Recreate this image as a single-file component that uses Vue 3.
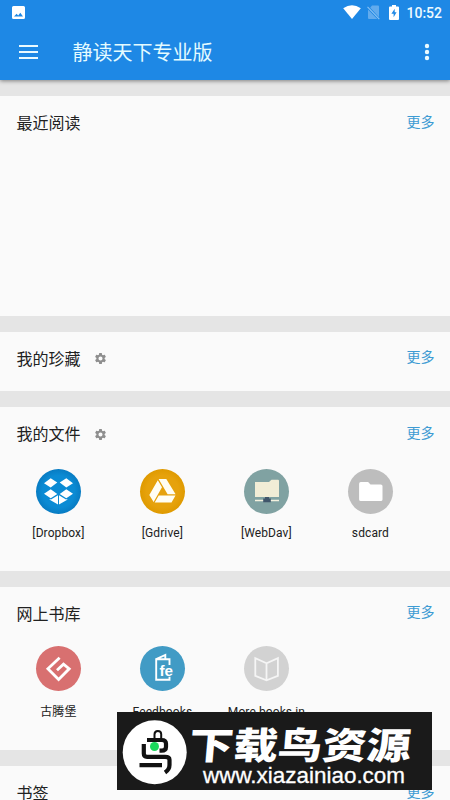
<script setup>
const files = [
  { name: '[Dropbox]', icon: 'dropbox' },
  { name: '[Gdrive]', icon: 'gdrive' },
  { name: '[WebDav]', icon: 'webdav' },
  { name: 'sdcard', icon: 'sdcard' },
]
const libraries = [
  { name: '古腾堡', icon: 'gutenberg' },
  { name: 'Feedbooks', icon: 'feedbooks' },
  { name: 'More books in', icon: 'catalog' },
]
const sections = [
  { title: '最近阅读', size: 'recent', gear: false, items: [] },
  { title: '我的珍藏', size: 'favorites', gear: true, items: [] },
  { title: '我的文件', size: 'grid-card', gear: true, items: files },
  { title: '网上书库', size: 'grid-card library', gear: false, items: libraries },
  { title: '书签', size: 'bookmarks', gear: false, items: [] },
]
</script>

<template>
  <div class="screen">
    <header class="top">
      <div class="status">
        <svg class="photo" viewBox="0 0 13 13"><path fill="#fff" fill-rule="evenodd" d="M1.500 0h10Q13 0 13 1.500v10q0 1.500-1.500 1.500h-10Q0 13 0 11.500v-10Q0 0 1.500 0zM2 10.500h9L8.300 6.800 6.200 9.400 4.600 7.700z" /></svg>
        <div class="status-right">
          <svg class="wifi" viewBox="0 0 18 14"><path fill="#fff" d="M.2 3.300Q9-3 17.800 3.300L9 14z" /></svg>
          <svg class="sim" viewBox="0 0 13 15"><path fill="#62abed" d="M5 .5H11q1 0 1 1v10.700L3.200 2.700zM1 4.600L10.300 14H2q-1 0-1-1z" /><path d="M.5 1.800L12.300 14.200" stroke="#8cc4f4" stroke-width="1.100" /></svg>
          <svg class="battery" viewBox="0 0 10 15"><path fill="#fff" d="M3 0h4v1.500h2q1 0 1 1V14q0 1-1 1H1q-1 0-1-1V2.500q0-1 1-1h2z" /><path fill="#1e88e5" d="M5.700 3.700L2.400 8.700h2.200v3.600l3-5H5.700z" /></svg>
          <span class="clock">10:52</span>
        </div>
      </div>
      <div class="appbar">
        <svg class="menu" viewBox="0 0 19 14"><path d="M0 1h19M0 7h19M0 13h19" stroke="#eafaff" stroke-width="2" /></svg>
        <h1>静读天下专业版</h1>
        <svg class="dots" viewBox="0 0 6 18"><g fill="#eafaff"><circle cx="3" cy="3" r="2.200" /><circle cx="3" cy="9" r="2.200" /><circle cx="3" cy="15" r="2.200" /></g></svg>
      </div>
    </header>

    <main>
      <section v-for="s in sections" :key="s.title" class="card" :class="s.size">
        <div class="head">
          <h2>{{ s.title }}</h2>
          <svg v-if="s.gear" class="gear" viewBox="2 2 20 20"><path fill="#8e8e8e" fill-rule="evenodd" d="M19.430 12.980c.040-.320.070-.640.070-.980s-.030-.660-.070-.980l2.110-1.650a.5.5 0 0 0 .120-.640l-2-3.460a.5.5 0 0 0-.610-.220l-2.490 1a7.300 7.300 0 0 0-1.690-.980l-.380-2.650A.49.49 0 0 0 14 2h-4a.49.49 0 0 0-.490.420l-.380 2.650c-.610.250-1.170.590-1.690.980l-2.490-1a.5.5 0 0 0-.610.220l-2 3.460a.5.5 0 0 0 .120.640l2.110 1.650a7.900 7.900 0 0 0 0 1.960l-2.110 1.650a.5.5 0 0 0-.120.640l2 3.460c.120.220.390.300.610.220l2.490-1c.520.400 1.080.730 1.690.980l.380 2.650c.030.240.240.420.490.420h4c.250 0 .460-.180.490-.420l.380-2.650c.610-.250 1.170-.590 1.690-.980l2.490 1c.230.090.490 0 .610-.220l2-3.460a.5.5 0 0 0-.120-.640zM12 15.700a3.700 3.700 0 1 1 0-7.400 3.700 3.700 0 0 1 0 7.400z" /></svg>
          <a class="more">更多</a>
        </div>
        <div v-if="s.items.length" class="items">
          <div v-for="it in s.items" :key="it.name" class="item">
            <div class="disc" :class="it.icon">
              <svg v-if="it.icon === 'dropbox'" viewBox="0 0 45 45">
                <g fill="#fff"><path d="M14.700 9.300L21.300 13.500 14.700 18.500 8 14.200zM30.300 9.300L37 14.200 30.300 18.500 23.700 13.500zM14.700 20.300L21.300 25 14.700 29.300 8 24.700zM30.300 20.300L37 24.700 30.300 29.300 23.700 25z" /><path d="M22 26.300v9.200L13.700 30.800v-.7l1.300.5zM23 26.300v9.200l8.300-4.700v-.7l-1.300.5z" /></g>
              </svg>
              <svg v-else-if="it.icon === 'gdrive'" viewBox="0 0 45 45"><path fill="#fffef4" d="M18.600 10h7.700l9.300 15.300h-8zM17.800 11.200L22 18.200 13.600 33 9.300 26zM18.700 26.400h16.800l-4 7H14.700z" /></svg>
              <svg v-else-if="it.icon === 'webdav'" viewBox="0 0 45 45"><path fill="#f1edd6" d="M11 13h14l2.500-2.200H34q1 0 1 1V28H11z" /><path stroke="#f4f2df" stroke-width="1.500" d="M11 31.500h24" /><path fill="#40566b" d="M21 28h4v1.500h1.800v3.700h-7.600v-3.700H21z" /></svg>
              <svg v-else-if="it.icon === 'sdcard'" viewBox="0 0 45 45"><path fill="#fff" d="M12.800 13h7.300l2.400 2.400h10.300q1.700 0 1.700 1.700v13.300q0 1.700-1.700 1.700h-20q-1.700 0-1.700-1.700V14.700q0-1.700 1.700-1.700z" /></svg>
              <svg v-else-if="it.icon === 'gutenberg'" viewBox="0 0 45 45"><path fill="none" stroke="#fff" stroke-width="2.800" d="M23.600 11.700L11.900 22.800 22.600 33.600 33.200 22.800 27.500 18.200 21 24.300" /></svg>
              <svg v-else-if="it.icon === 'feedbooks'" viewBox="0 0 45 45"><path fill="none" stroke="#fff" stroke-width="1.900" d="M20.800 13.200H16.200V33.700H29.500V30.800M16.200 13.200L25.300 9V13.200H29.500V19M20.800 13.200h4.500" /><text x="19.500" y="29.800" fill="#fff" textLength="13.500" lengthAdjust="spacingAndGlyphs">fe</text></svg>
              <svg v-else viewBox="0 0 45 45"><path fill="none" stroke="#f5f5f5" stroke-width="1.800" d="M22.500 17.300L11.300 12.200V29.800L22.500 34.300 33.900 29.800V12.200zV34.300" /></svg>
            </div>
            <span class="label">{{ it.name }}</span>
          </div>
        </div>
      </section>
    </main>

    <aside class="banner">
      <svg viewBox="0 0 315 78">
        <rect width="315" height="78" fill="#1a1a1a" />
        <circle cx="37.700" cy="40.300" r="32" fill="#fff" />
        <g fill="none" stroke="#111" stroke-width="4.200">
          <path stroke-width="2" d="M37.500 26V22.500Q37.500 19 40.800 19T44.200 22v4" />
          <path d="M30 28H44.500q4.500 0 4.500 3.500V35q0 3.700-4.500 3.700h-2" />
          <path d="M26.800 32v9.500q0 3.300 3.300 3.300H48q4.500 0 4.500 3V53q0 4.500-4.500 7.500M22.500 53.200H45" />
        </g>
        <circle cx="37.500" cy="34.500" r="4.500" fill="#1bd75c" />
        <g transform="translate(71 47) skewX(-5) scale(1.200 1)"><text class="brand">下载鸟资源</text></g>
        <text class="url" x="86" y="70.500" textLength="202" lengthAdjust="spacingAndGlyphs">www.xiazainiao.com</text>
      </svg>
    </aside>
  </div>
</template>

<style>
body {
  margin: 0;
  overflow: hidden;
}
</style>

<style scoped>
.screen {
  position: relative;
  width: 450px;
  height: 800px;
  overflow: hidden;
  display: flex;
  flex-direction: column;
  background: #e5e5e5;
  font-family: Roboto, "Noto Sans CJK SC", sans-serif;
  color: #212121;
}
svg {
  display: block;
}
.top {
  height: 80px;
  flex: none;
  background: #1e88e5;
  box-shadow: 0 1px 4px rgba(0, 0, 0, 0.45);
}
.status {
  height: 24px;
  display: flex;
  align-items: center;
  justify-content: space-between;
  padding: 0 8px 0 12px;
}
.photo {
  width: 13px;
  height: 13px;
}
.status-right {
  display: flex;
  align-items: center;
}
.wifi {
  width: 18px;
  height: 14px;
  margin-right: 6px;
}
.sim {
  width: 13px;
  height: 15px;
  margin-right: 9px;
}
.battery {
  width: 10px;
  height: 15px;
  margin-right: 7px;
}
.clock {
  font-size: 14px;
  line-height: 24px;
  font-weight: 500;
  color: #eefaff;
  padding-top: 1px;
}
.appbar {
  height: 56px;
  display: flex;
  align-items: center;
  padding: 0 20.500px 0 19px;
}
.menu {
  width: 19px;
  height: 14px;
}
h1 {
  margin: 0 auto 0 34.500px;
  padding-top: 2px;
  font-size: 20px;
  line-height: 28px;
  font-weight: 400;
  color: #e4fbff;
}
.dots {
  width: 6px;
  height: 18px;
}
main {
  display: flex;
  flex-direction: column;
  gap: 16px;
  padding-top: 16px;
}
.card {
  flex: none;
  background: #fafafa;
}
.recent {
  height: 219.500px;
}
.favorites {
  height: 59.500px;
}
.grid-card {
  height: 163.500px;
}
.bookmarks {
  height: 60px;
}
.head {
  height: 54px;
  display: flex;
  align-items: center;
  padding: 0 15.500px 0 16.500px;
}
h2 {
  margin: 0;
  padding-top: 2px;
  font-size: 16px;
  line-height: 24px;
  font-weight: 400;
}
.gear {
  width: 11px;
  height: 11px;
  margin-left: 14.500px;
}
.more {
  margin-left: auto;
  padding-bottom: 3px;
  font-size: 14px;
  line-height: 20px;
  color: #3d9bd3;
}
.items {
  display: grid;
  grid-template-columns: repeat(4, 104px);
  padding: 8px 0 0 6.400px;
}
.item {
  display: flex;
  flex-direction: column;
  align-items: center;
}
.disc {
  width: 45px;
  height: 45px;
  border-radius: 50%;
}
.library .disc {
  margin-top: -2.500px;
}
.dropbox {
  background: radial-gradient(#0b8bd4 50%, #087cc3 70%);
}
.gdrive {
  background: radial-gradient(#e6a20c 50%, #df9a00 70%);
}
.webdav {
  background: #80a2a2;
}
.sdcard {
  background: #bdbdbd;
}
.gutenberg {
  background: #d87070;
}
.feedbooks {
  background: #419bc5;
}
.feedbooks text {
  font: 700 15px "Liberation Sans", sans-serif;
}
.catalog {
  background: #d2d2d2;
}
.label {
  margin-top: 10px;
  font-size: 12px;
  line-height: 18px;
  letter-spacing: 0.100px;
  white-space: nowrap;
}
.library .label {
  margin-top: 12px;
}
.banner {
  position: absolute;
  left: 117px;
  top: 712px;
  width: 315px;
  height: 78px;
}
.brand {
  font: 900 37px "Noto Sans CJK SC", sans-serif;
  fill: #fff;
}
.url {
  font: 400 21.500px "Liberation Sans", sans-serif;
  fill: #fff;
  stroke: #fff;
  stroke-width: 0.300px;
}
</style>
